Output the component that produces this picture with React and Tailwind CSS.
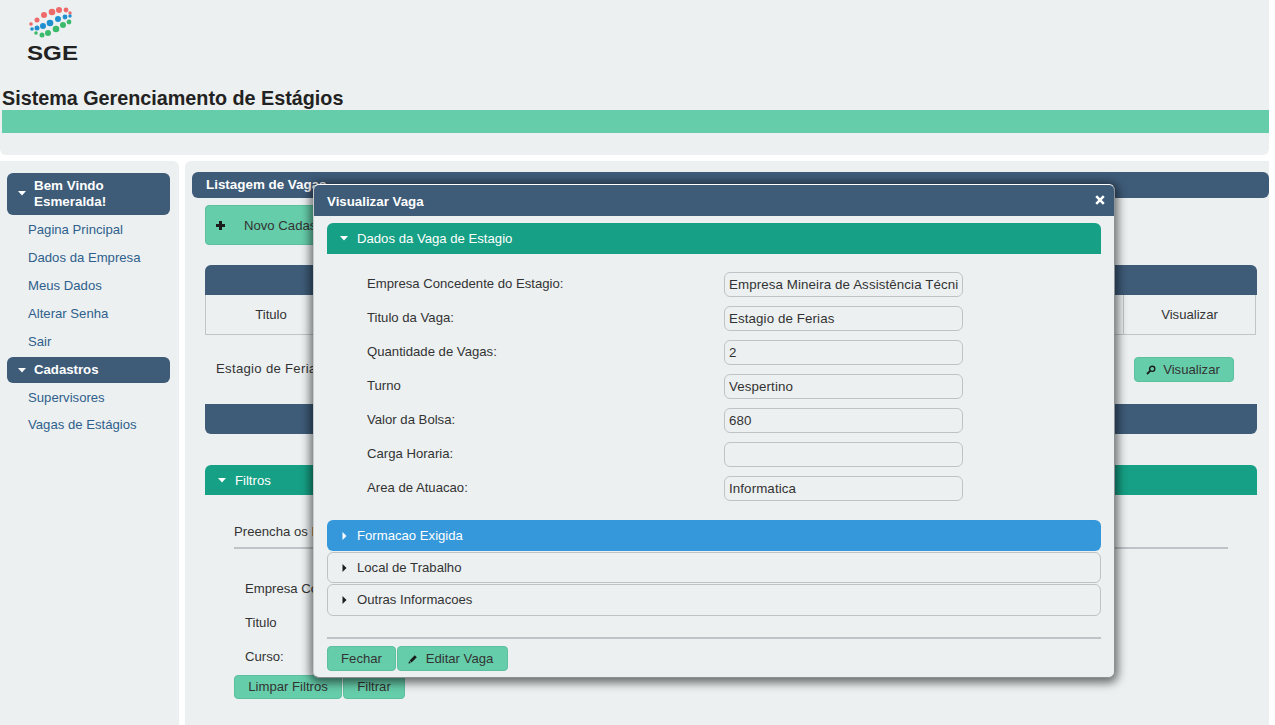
import React from 'react'

const navy = 'bg-[#3e5b78]'

function TriDown({ className = 'fill-white' }) {
  return (
    <svg width="8" height="5" viewBox="0 0 8 5" className={className}>
      <path d="M0 0h8L4 4.5z" />
    </svg>
  )
}

function TriRight({ className = 'fill-white' }) {
  return (
    <svg width="5" height="8" viewBox="0 0 5 8" className={className}>
      <path d="M0.5 0v8L4.5 4z" />
    </svg>
  )
}

function PlusIcon() {
  return (
    <svg width="9" height="9" viewBox="0 0 9 9" className="fill-[#1c1c1c]">
      <path d="M3 0h3v3h3v3H6v3H3V6H0V3h3z" />
    </svg>
  )
}

function SearchIcon() {
  return (
    <svg width="10" height="10" viewBox="0 0 10 10" fill="none" stroke="#1c1c1c">
      <circle cx="6.2" cy="3.8" r="2.6" strokeWidth="1.4" />
      <path d="M4.2 5.8L1 9" strokeWidth="1.8" />
    </svg>
  )
}

function PencilIcon() {
  return (
    <svg width="10" height="10" viewBox="0 0 10 10" className="fill-[#1c1c1c]">
      <path d="M6.8 1.2l2 2L3.6 8.4l-2-2zM1.1 7L3 8.9l-2.6.7z" />
    </svg>
  )
}

function CloseIcon() {
  return (
    <svg width="10" height="10" viewBox="0 0 10 10" stroke="#fff" strokeWidth="2.6">
      <path d="M1.2 1.2l7.6 7.6M8.8 1.2L1.2 8.8" />
    </svg>
  )
}

function Logo() {
  const red = [[11, 24], [17, 20], [24, 15], [32, 12], [39, 10], [46, 10], [50, 13]]
  const blue = [[12, 29], [17, 28], [23, 26], [30, 23], [38, 19], [45, 17], [50, 16]]
  const green = [[16, 33], [22, 35], [28, 33], [36, 29], [43, 25], [49, 22]]
  const sizes = [1.8, 2.5, 3, 3.3, 3, 2.4, 1.7]
  return (
    <svg width="60" height="62" viewBox="0 0 60 62">
      {red.map(([x, y], i) => <circle key={i} cx={x} cy={y} r={sizes[i]} fill="#ee6a6a" />)}
      {blue.map(([x, y], i) => <circle key={i} cx={x} cy={y} r={sizes[i]} fill="#1f8fd0" />)}
      {green.map(([x, y], i) => <circle key={i} cx={x} cy={y} r={sizes[i]} fill="#3cba6c" />)}
      <text x="7" y="60" textLength="51" lengthAdjust="spacingAndGlyphs" fontFamily="'Liberation Sans', sans-serif" fontWeight="700" fontSize="21" fill="#222">SGE</text>
    </svg>
  )
}

function GreenBtn({ className = '', children }) {
  return (
    <button className={`flex items-center justify-center rounded-[4px] border border-[#5cbf9d] bg-[#66cdaa] text-[#333] ${className}`}>
      {children}
    </button>
  )
}

const menu1 = ['Pagina Principal', 'Dados da Empresa', 'Meus Dados', 'Alterar Senha', 'Sair']
const menu2 = ['Supervisores', 'Vagas de Estágios']
const fields = [
  ['Empresa Concedente do Estagio:', 'Empresa Mineira de Assistência Técnica'],
  ['Titulo da Vaga:', 'Estagio de Ferias'],
  ['Quantidade de Vagas:', '2'],
  ['Turno', 'Vespertino'],
  ['Valor da Bolsa:', '680'],
  ['Carga Horaria:', ''],
  ['Area de Atuacao:', 'Informatica'],
]

function Sidebar() {
  return (
    <aside className="flex w-[179px] shrink-0 flex-col rounded-tr-[6px] bg-[#ecf0f1] px-[7px] pt-[12px]">
      <div className={`flex h-[42px] w-[163px] items-center rounded-[6px] ${navy} pb-[1px] pl-[11px] text-[13.4px] leading-[16px] font-bold text-white`}>
        <TriDown />
        <span className="ml-[8px]">Bem Vindo<br />Esmeralda!</span>
      </div>
      <ul className="pt-[1px] pl-[21px] text-[#2f5f8c]">
        {menu1.map((m) => <li key={m} className="flex h-[28px] items-center">{m}</li>)}
      </ul>
      <div className={`mt-[1px] flex h-[26px] w-[163px] items-center rounded-[6px] ${navy} pl-[11px] text-[13.2px] font-bold text-white`}>
        <TriDown />
        <span className="ml-[8px]">Cadastros</span>
      </div>
      <ul className="pt-[1px] pl-[21px] text-[#2f5f8c]">
        {menu2.map((m) => <li key={m} className="flex h-[27px] items-center">{m}</li>)}
      </ul>
    </aside>
  )
}

function Content() {
  return (
    <main className="min-w-0 flex-1 rounded-tl-[6px] bg-[#ecf0f1] pt-[11px] pl-[7px]">
      <div className={`flex h-[26px] items-center rounded-[6px] ${navy} pt-[1px] pl-[14px] text-[13.4px] font-bold text-white`}>
        Listagem de Vagas
      </div>
      <div className="pt-[7px] pr-[12px] pl-[13px]">
        <GreenBtn className="h-[40px] w-[180px] justify-start pt-[1px] pl-[10px]">
          <PlusIcon />
          <span className="ml-[19px]">Novo Cadastro</span>
        </GreenBtn>

        <div className={`mt-[20px] h-[30px] rounded-t-[6px] ${navy}`} />
        <div className="mr-[1px] flex h-[40px] border border-t-0 border-[#c0c5c7]">
          <div className="flex w-[130px] items-center justify-center">Titulo</div>
          <div className="flex-1 border-x border-[#c0c5c7]" />
          <div className="flex w-[131px] items-center justify-center">Visualizar</div>
        </div>
        <div className="flex h-[69px] items-center justify-between pr-[23px] pl-[11px]">
          <span className="pb-[2px] tracking-[0.3px]">Estagio de Ferias</span>
          <GreenBtn className="h-[25px] w-[100px] pr-[2px]">
            <SearchIcon />
            <span className="ml-[7px]">Visualizar</span>
          </GreenBtn>
        </div>
        <div className={`h-[30px] rounded-b-[6px] ${navy}`} />

        <div className="mt-[31px] flex h-[30px] items-center rounded-t-[6px] bg-[#16a085] pl-[13px] text-white">
          <TriDown />
          <span className="ml-[9px] pt-[1px]">Filtros</span>
        </div>
        <div className="pt-[27px] pr-[29px] pl-[29px]">
          <div className="h-[27px] border-b-2 border-[#bdc3c7]">Preencha os Filtros</div>
          <div className="pt-[30px] pl-[11px]">
            <div className="h-[34px]">Empresa Concedente</div>
            <div className="h-[34px]">Titulo</div>
            <div className="h-[28px]">Curso:</div>
          </div>
          <div className="flex gap-[1px]">
            <GreenBtn className="h-[24px] w-[108px]">Limpar Filtros</GreenBtn>
            <GreenBtn className="h-[24px] w-[62px]">Filtrar</GreenBtn>
          </div>
        </div>
      </div>
    </main>
  )
}

function Modal() {
  return (
    <div className="absolute top-[184px] left-[313px] h-[494px] w-[802px] rounded-[6px] border border-t-white border-r-[#8b9194] border-b-[#8b9194] border-l-[#c8cccd] bg-[#ecf0f1] shadow-[0_2px_10px_3px_rgba(0,0,0,0.55)]">
      <div className={`flex h-[31px] items-center justify-between rounded-t-[5px] ${navy} pr-[9px] pl-[13px] text-[13.3px] font-bold text-white`}>
        <span className="pt-[2px]">Visualizar Vaga</span>
        <span className="pb-[2px]"><CloseIcon /></span>
      </div>
      <div className="px-[13px] pt-[7px]">
        <div className="flex h-[31px] items-center rounded-t-[6px] bg-[#16a085] pl-[13px] text-white">
          <TriDown />
          <span className="ml-[9px]">Dados da Vaga de Estagio</span>
        </div>
        <div className="flex flex-col gap-[9px] pt-[18px] pl-[40px]">
          {fields.map(([label, value]) => (
            <div key={label} className="flex h-[25px] items-center">
              <span className="w-[357px] shrink-0 pb-[2px]">{label}</span>
              <input
                readOnly
                value={value}
                className="h-[25px] w-[239px] rounded-[6px] border border-[#bdc3c7] bg-transparent px-[4px] text-[13.33px] tracking-[0.1px] text-[#333]"
              />
            </div>
          ))}
        </div>
        <div className="mt-[19px] flex h-[31px] items-center rounded-[6px] bg-[#3498db] pl-[15px] text-white">
          <TriRight />
          <span className="ml-[10px]">Formacao Exigida</span>
        </div>
        <div className="mt-[1px] flex h-[31px] items-center rounded-[6px] border border-[#bdc3c7] pl-[14px]">
          <TriRight className="fill-[#1c1c1c]" />
          <span className="ml-[10px]">Local de Trabalho</span>
        </div>
        <div className="mt-[1px] flex h-[32px] items-center rounded-[6px] border border-[#bdc3c7] pl-[14px]">
          <TriRight className="fill-[#1c1c1c]" />
          <span className="ml-[10px]">Outras Informacoes</span>
        </div>
        <div className="mt-[21px] border-t-2 border-[#bdc3c7]" />
        <div className="flex gap-[1px] pt-[7px]">
          <GreenBtn className="h-[25px] w-[69px]">Fechar</GreenBtn>
          <GreenBtn className="h-[25px] w-[111px] pr-[4px]">
            <PencilIcon />
            <span className="ml-[8px]">Editar Vaga</span>
          </GreenBtn>
        </div>
      </div>
    </div>
  )
}

export default function App() {
  return (
    <div className="relative h-[725px] w-[1269px] overflow-hidden bg-white font-['Liberation_Sans',Arial,sans-serif] text-[13.15px] text-[#333]">
      <header className="h-[155px] rounded-b-[6px] bg-[#ecf0f1] pl-[2px]">
        <div className="h-[85px] pl-[18px]">
          <Logo />
        </div>
        <h1 className="pt-[1px] text-[19.75px] leading-[24px] font-bold text-[#222]">Sistema Gerenciamento de Estágios</h1>
        <div className="h-[23px] bg-[#66cdaa]" />
      </header>
      <div className="mt-[6px] flex h-[564px] gap-[6px]">
        <Sidebar />
        <Content />
      </div>
      <Modal />
    </div>
  )
}
